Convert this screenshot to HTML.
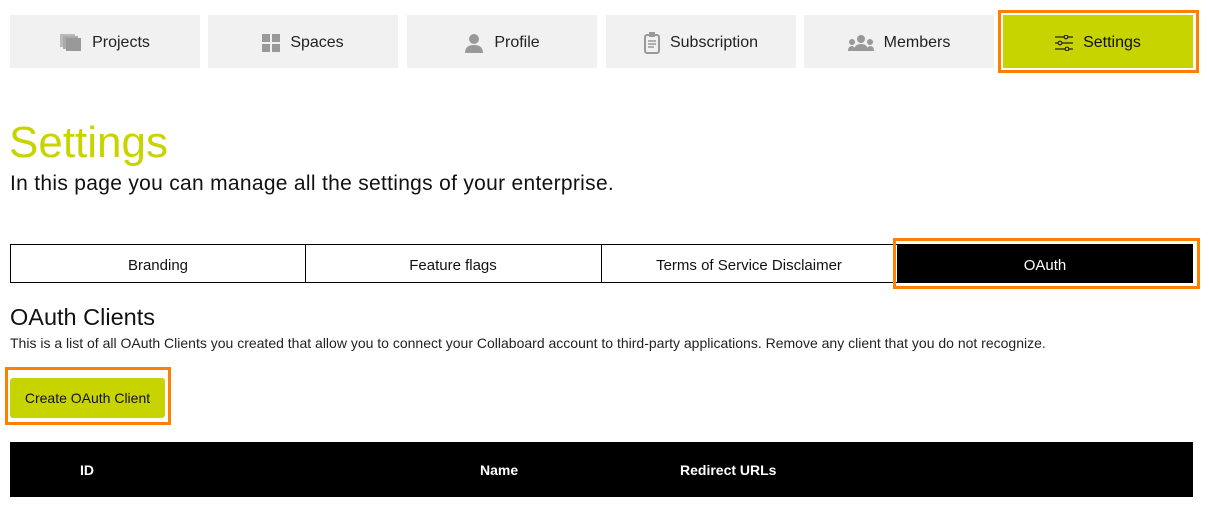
<!DOCTYPE html>
<html><head><style>
body{margin:0;width:1209px;height:509px;background:#fff;font-family:"Liberation Sans",sans-serif;position:relative;overflow:hidden;color:#111}
.nav{position:absolute;top:15px;height:53px;width:190px;background:#f1f1f1;display:flex;align-items:center;justify-content:center;font-size:16px;color:#222;box-sizing:border-box;padding-top:2px}
.nav svg{margin-right:10px}
.tab{position:absolute;top:244px;height:39px;border:1px solid #000;box-sizing:border-box;display:flex;align-items:center;justify-content:center;font-size:15px;padding-top:3px}
.ob{position:absolute;border:3px solid #ff8000;box-sizing:border-box}
.th{position:absolute;top:462px;color:#fff;font-weight:bold;font-size:14px}
</style></head><body>
<div class="nav" style="left:10px"><svg width="22" height="18" viewBox="0 0 22 18"><rect x="0" y="0" width="15" height="13" fill="#bbb"/><rect x="3" y="2" width="15" height="13" fill="#aaa"/><rect x="6" y="4" width="15" height="13" fill="#999"/></svg>Projects</div>
<div class="nav" style="left:208px"><svg width="18" height="18"><rect x="0" y="0" width="8" height="8" fill="#999"/><rect x="10" y="0" width="8" height="8" fill="#999"/><rect x="0" y="10" width="8" height="8" fill="#999"/><rect x="10" y="10" width="8" height="8" fill="#999"/></svg>Spaces</div>
<div class="nav" style="left:407px"><svg width="20" height="20"><circle cx="10" cy="6" r="5" fill="#999"/><path d="M1 20 Q1 12 10 12 Q19 12 19 20Z" fill="#999"/></svg>Profile</div>
<div class="nav" style="left:606px"><svg width="16" height="22"><rect x="1" y="3" width="14" height="18" rx="2" fill="none" stroke="#999" stroke-width="2"/><rect x="5" y="0" width="6" height="5" fill="#999"/><path d="M4 9h8M4 12h8M4 15h6" stroke="#999" stroke-width="1.5"/></svg>Subscription</div>
<div class="nav" style="left:804px"><svg width="26" height="16"><circle cx="13" cy="4" r="4" fill="#999"/><circle cx="4" cy="7" r="3" fill="#999"/><circle cx="22" cy="7" r="3" fill="#999"/><path d="M6 16Q6 9 13 9Q20 9 20 16Z M0 16Q0 11 4 11Q7 11 7 16Z M19 16Q19 11 22 11Q26 11 26 16Z" fill="#999"/></svg>Members</div>
<div class="ob" style="left:998px;top:10px;width:201px;height:63px"></div>
<div class="nav" style="left:1003px;background:#c8d400;color:#111"><svg width="18" height="16"><path d="M0 2h9M13 2h5M0 8h3M7 8h11M0 14h10M14 14h4" stroke="#222" stroke-width="1.3"/><circle cx="11" cy="2" r="1.8" fill="none" stroke="#222" stroke-width="1.2"/><circle cx="5" cy="8" r="1.8" fill="none" stroke="#222" stroke-width="1.2"/><circle cx="12" cy="14" r="1.8" fill="none" stroke="#222" stroke-width="1.2"/></svg>Settings</div>
<div style="position:absolute;left:9px;top:118px;font-size:44px;color:#c8d400">Settings</div>
<div style="position:absolute;left:10px;top:172px;font-size:21px;letter-spacing:0.3px;color:#111">In this page you can manage all the settings of your enterprise.</div>
<div class="tab" style="left:10px;width:296px">Branding</div>
<div class="tab" style="left:305px;width:297px;border-left:none">Feature flags</div>
<div class="tab" style="left:601px;width:297px;border-left:none">Terms of Service Disclaimer</div>
<div class="ob" style="left:893px;top:238px;width:307px;height:51px"></div>
<div class="tab" style="left:897px;width:296px;background:#000;color:#fff">OAuth</div>
<div style="position:absolute;left:10px;top:304px;font-size:23.5px;color:#111">OAuth Clients</div>
<div style="position:absolute;left:10px;top:335px;font-size:14px;color:#222;white-space:nowrap">This is a list of all OAuth Clients you created that allow you to connect your Collaboard account to third-party applications. Remove any client that you do not recognize.</div>
<div class="ob" style="left:5px;top:367px;width:166px;height:58px"></div>
<div style="position:absolute;left:10px;top:378px;width:155px;height:40px;background:#c8d400;border-radius:3px;display:flex;align-items:center;justify-content:center;font-size:14px;color:#111">Create OAuth Client</div>
<div style="position:absolute;left:10px;top:442px;width:1183px;height:55px;background:#000"></div>
<div class="th" style="left:80px">ID</div>
<div class="th" style="left:480px">Name</div>
<div class="th" style="left:680px">Redirect URLs</div>
</body></html>
